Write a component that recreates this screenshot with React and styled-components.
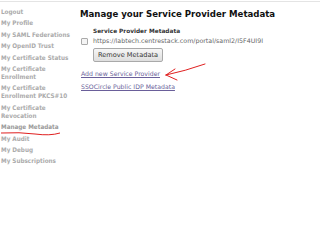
import styled, { createGlobalStyle } from "styled-components";

const GlobalStyle = createGlobalStyle`
  body {
    margin: 0;
    background: #fff;
    font-family: "DejaVu Sans", Verdana, sans-serif;
  }
`;

const Page = styled.div`
  position: relative;
  width: 320px;
  height: 250px;
  overflow: hidden;
  border-top: 1px solid #e4e4e4;
  margin-top: 1px;
  display: flex;
`;

const Sidebar = styled.ul`
  list-style: none;
  margin: 0;
  padding: 6px 0 0 1px;
  width: 79px;
  flex-shrink: 0;
  display: flex;
  flex-direction: column;
  gap: 3.4px;
`;

const NavItem = styled.li`
  font-family: "DejaVu Sans Condensed", "DejaVu Sans", sans-serif;
  font-size: 6.3px;
  font-weight: bold;
  line-height: 8px;
  color: ${(p) => (p.$active ? "#9a9a9a" : "#ababab")};
  width: 72px;
`;

const Main = styled.div`
  display: flex;
  flex-direction: column;
  padding-top: 6px;
`;

const Title = styled.h1`
  margin: 0;
  font-size: 8.6px;
  line-height: 12px;
  color: #111;
`;

const Section = styled.div`
  padding: 7px 0 0 13px;
  display: flex;
  flex-direction: column;
`;

const SubTitle = styled.h2`
  margin: 0;
  font-size: 5.8px;
  line-height: 8px;
  color: #333;
`;

const Row = styled.label`
  display: flex;
  align-items: center;
  gap: 5px;
  margin: 2px 0 0 -12px;
  font-size: 6.3px;
  color: #666;
  line-height: 8px;
`;

const Check = styled.span`
  width: 5px;
  height: 5px;
  border: 1px solid #aaa;
  border-radius: 1px;
  background: #f4f4f4;
`;

const Button = styled.button`
  align-self: flex-start;
  margin-top: 3px;
  height: 14px;
  padding: 0 4px;
  font-family: "DejaVu Sans", Verdana, sans-serif;
  font-size: 6.6px;
  color: #333;
  border: 1px solid #a9a9a9;
  border-radius: 2px;
  background: linear-gradient(#f6f6f6, #dedede);
`;

const Links = styled.div`
  display: flex;
  flex-direction: column;
  gap: 5px;
  margin-top: 8px;
  padding-left: 1px;
`;

const Link = styled.a`
  font-size: 6.2px;
  line-height: 8px;
  color: #6a5f9a;
  text-decoration: underline;
`;

const Scribble = styled.svg`
  position: absolute;
  left: 0;
  top: 0;
  pointer-events: none;
`;

const items = [
  "Logout",
  "My Profile",
  "My SAML Federations",
  "My OpenID Trust",
  "My Certificate Status",
  "My Certificate Enrollment",
  "My Certificate Enrollment PKCS#10",
  "My Certificate Revocation",
  "Manage Metadata",
  "My Audit",
  "My Debug",
  "My Subscriptions",
];

export default function App() {
  return (
    <>
      <GlobalStyle />
      <Page>
        <Sidebar>
          {items.map((name) => (
            <NavItem key={name} $active={name === "Manage Metadata"}>
              {name}
            </NavItem>
          ))}
        </Sidebar>
        <Main>
          <Title>Manage your Service Provider Metadata</Title>
          <Section>
            <SubTitle>Service Provider Metadata</SubTitle>
            <Row>
              <Check />
              https://labtech.centrestack.com/portal/saml2/I5F4UI9I
            </Row>
            <Button>Remove Metadata</Button>
          </Section>
          <Links>
            <Link href="#">Add new Service Provider</Link>
            <Link href="#">SSOCircle Public IDP Metadata</Link>
          </Links>
        </Main>
        <Scribble width="320" height="250" viewBox="0 0 320 250">
          <path
            d="M1 131 Q20 130 35 132 Q50 134 60 131"
            fill="none"
            stroke="#e02020"
            strokeWidth="1"
          />
          <path
            d="M205 62 Q185 69 166 73 M166 73 L175 67 M166 73 L177 78"
            fill="none"
            stroke="#e02020"
            strokeWidth="1"
            strokeLinecap="round"
          />
        </Scribble>
      </Page>
    </>
  );
}
